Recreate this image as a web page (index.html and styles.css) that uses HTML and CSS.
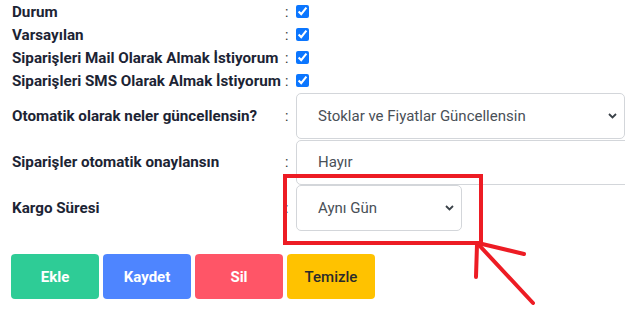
FILE: index.html
```html
<!DOCTYPE html>
<html lang="tr">
<head>
    <meta charset="UTF-8">
    <meta name="viewport" content="width=device-width, initial-scale=1.0">
    <title>Ayarlar</title>
    <link rel="stylesheet" href="styles.css">
</head>
<body>
    <div class="form">
        <!-- Onay kutuları -->
        <div class="row check-row">
            <label>Durum</label><span class="colon">:</span>
            <input type="checkbox" checked>
        </div>
        <div class="row check-row">
            <label>Varsayılan</label><span class="colon">:</span>
            <input type="checkbox" checked>
        </div>
        <div class="row check-row">
            <label>Siparişleri Mail Olarak Almak İstiyorum</label><span class="colon">:</span>
            <input type="checkbox" checked>
        </div>
        <div class="row check-row">
            <label>Siparişleri SMS Olarak Almak İstiyorum</label><span class="colon">:</span>
            <input type="checkbox" checked>
        </div>

        <!-- Seçim alanları -->
        <div class="row field-row first-field">
            <label>Otomatik olarak neler güncellensin?</label><span class="colon">:</span>
            <div class="control select wide">
                <span>Stoklar ve Fiyatlar Güncellensin</span>
                <svg class="chevron" width="9" height="6" viewBox="0 0 9 6"><path d="M1 1 L4.5 4.5 L8 1" fill="none" stroke="#3a4148" stroke-width="1.8"/></svg>
            </div>
        </div>
        <div class="row field-row">
            <label>Siparişler otomatik onaylansın</label><span class="colon">:</span>
            <div class="control input">
                <span>Hayır</span>
            </div>
        </div>
        <div class="row field-row">
            <label>Kargo Süresi</label><span class="colon">:</span>
            <div class="control select narrow">
                <span>Aynı Gün</span>
                <svg class="chevron" width="9" height="6" viewBox="0 0 9 6"><path d="M1 1 L4.5 4.5 L8 1" fill="none" stroke="#3a4148" stroke-width="1.8"/></svg>
            </div>
        </div>
    </div>

    <div class="buttons">
        <button class="btn btn-green">Ekle</button>
        <button class="btn btn-blue">Kaydet</button>
        <button class="btn btn-red">Sil</button>
        <button class="btn btn-yellow">Temizle</button>
    </div>

    <!-- İşaretleme -->
    <svg class="annotation" width="625" height="330" viewBox="0 0 625 330">
        <rect x="285" y="176" width="196" height="67" fill="none" stroke="#ed1c24" stroke-width="4"/>
        <g stroke="#ed1c24" stroke-width="4" stroke-linecap="round" fill="none">
            <line x1="478" y1="244" x2="533" y2="303"/>
            <line x1="477" y1="245" x2="476" y2="277"/>
            <line x1="478" y1="243" x2="524" y2="254"/>
        </g>
    </svg>
</body>
</html>
```

FILE: styles.css
```css
body {
    margin: 0;
    width: 625px;
    height: 330px;
    overflow: hidden;
    position: relative;
    background: #ffffff;
    font-family: Roboto, "Liberation Sans", Arial, sans-serif;
    color: #1c2434;
}

.form {
    padding-left: 12px;
}

.row {
    display: grid;
    grid-template-columns: 273px 11px auto;
    align-items: center;
}

.row label {
    font-size: 15.2px;
    font-weight: bold;
    white-space: nowrap;
}

.colon {
    font-size: 14px;
    color: #333;
}

.check-row {
    height: 23px;
}

.check-row input {
    width: 13px;
    height: 13px;
    margin: 0;
    accent-color: #0b76ff;
}

.field-row {
    height: 46px;
}

.first-field {
    margin-top: 1px;
}

.control {
    box-sizing: border-box;
    height: 46px;
    border: 1px solid #d3d6da;
    border-radius: 5px;
    padding: 0 0 0 21px;
    display: flex;
    align-items: center;
    justify-content: space-between;
    font-size: 15px;
    color: #495057;
}

.control.wide {
    width: 329px;
}

.control.narrow {
    width: 166px;
}

.control.input {
    width: 340px;
    height: 45px;
}

.chevron {
    margin-right: 7px;
}

.buttons {
    display: flex;
    gap: 4px;
    margin: 23px 0 0 11px;
}

.btn {
    width: 88px;
    height: 45px;
    border: none;
    border-radius: 4px;
    font-family: Roboto, "Liberation Sans", Arial, sans-serif;
    font-size: 15px;
    font-weight: bold;
    color: #ffffff;
    cursor: pointer;
}

.btn-green {
    background-color: #2ecc96;
}

.btn-blue {
    background-color: #4e85ff;
}

.btn-red {
    background-color: #ff5567;
}

.btn-yellow {
    background-color: #ffc200;
    color: #2b2b2b;
    font-weight: 500;
}

.annotation {
    position: absolute;
    left: 0;
    top: 0;
    pointer-events: none;
}
```
